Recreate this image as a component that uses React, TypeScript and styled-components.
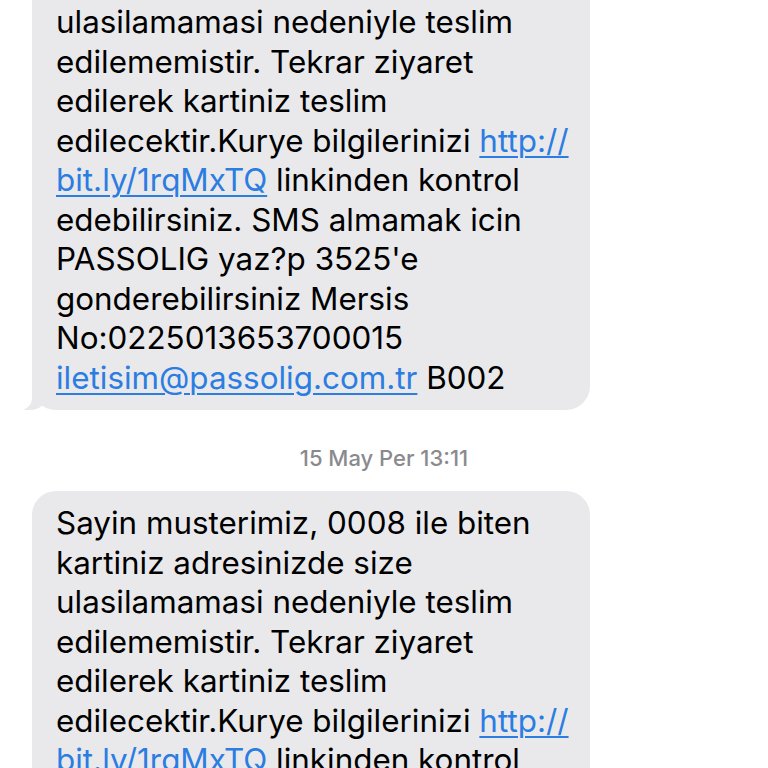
import React from "react";
import styled, { createGlobalStyle } from "styled-components";

const GlobalStyle = createGlobalStyle`
  html, body {
    margin: 0;
    padding: 0;
    background: #ffffff;
    height: 768px;
    overflow: hidden;
  }
  body {
    font-family: Inter, "Noto Sans", "Liberation Sans", sans-serif;
    -webkit-font-smoothing: antialiased;
  }
`;

const Thread = styled.div`
  display: flex;
  flex-direction: column;
  align-items: flex-start;
  padding: 0 32px;
  margin-top: -89px;
`;

const Bubble = styled.div<{ $tail?: boolean }>`
  position: relative;
  box-sizing: border-box;
  width: 558px;
  background: #e9e9eb;
  border-radius: 24px;
  padding: 13px 18px 12px 24px;
  color: #000000;
  font-size: 31.4px;
  line-height: 39.5px;
  letter-spacing: 0;
  white-space: nowrap;

  ${({ $tail }) =>
    $tail &&
    `
    &::before {
      content: "";
      position: absolute;
      left: -8px;
      bottom: 0;
      width: 24px;
      height: 26px;
      background: #e9e9eb;
      border-bottom-right-radius: 18px 16px;
    }
    &::after {
      content: "";
      position: absolute;
      left: -12px;
      bottom: 0;
      width: 12px;
      height: 27px;
      background: #ffffff;
      border-bottom-right-radius: 12px;
    }
  `}
`;

const Line = styled.div`
  position: relative;
  z-index: 1;
`;

const Link = styled.span`
  color: #2b7de2;
  text-decoration: underline;
  text-decoration-thickness: 2px;
  text-underline-offset: 4px;
`;

const Stamp = styled.div`
  align-self: center;
  margin: 34px 0 19px;
  color: #8a8a8e;
  font-size: 22px;
  font-weight: 500;
  line-height: 28px;
`;

type Piece = string | { link: string };

const message: Piece[][] = [
  ["Sayin musterimiz, 0008 ile biten"],
  ["kartiniz adresinizde size"],
  ["ulasilamamasi nedeniyle teslim"],
  ["edilememistir. Tekrar ziyaret"],
  ["edilerek kartiniz teslim"],
  ["edilecektir.Kurye bilgilerinizi ", { link: "http://" }],
  [{ link: "bit.ly/1rqMxTQ" }, " linkinden kontrol"],
  ["edebilirsiniz. SMS almamak icin"],
  ["PASSOLIG yaz?p 3525'e"],
  ["gonderebilirsiniz Mersis"],
  ["No:0225013653700015"],
  [{ link: "iletisim@passolig.com.tr" }, " B002"],
];

const MessageBody: React.FC = () => (
  <>
    {message.map((pieces, i) => (
      <Line key={i}>
        {pieces.map((p, j) =>
          typeof p === "string" ? (
            <React.Fragment key={j}>{p}</React.Fragment>
          ) : (
            <Link key={j}>{p.link}</Link>
          )
        )}
      </Line>
    ))}
  </>
);

const App: React.FC = () => (
  <>
    <GlobalStyle />
    <Thread>
      <Bubble $tail>
        <MessageBody />
      </Bubble>
      <Stamp>15 May Per 13:11</Stamp>
      <Bubble>
        <MessageBody />
      </Bubble>
    </Thread>
  </>
);

export default App;
